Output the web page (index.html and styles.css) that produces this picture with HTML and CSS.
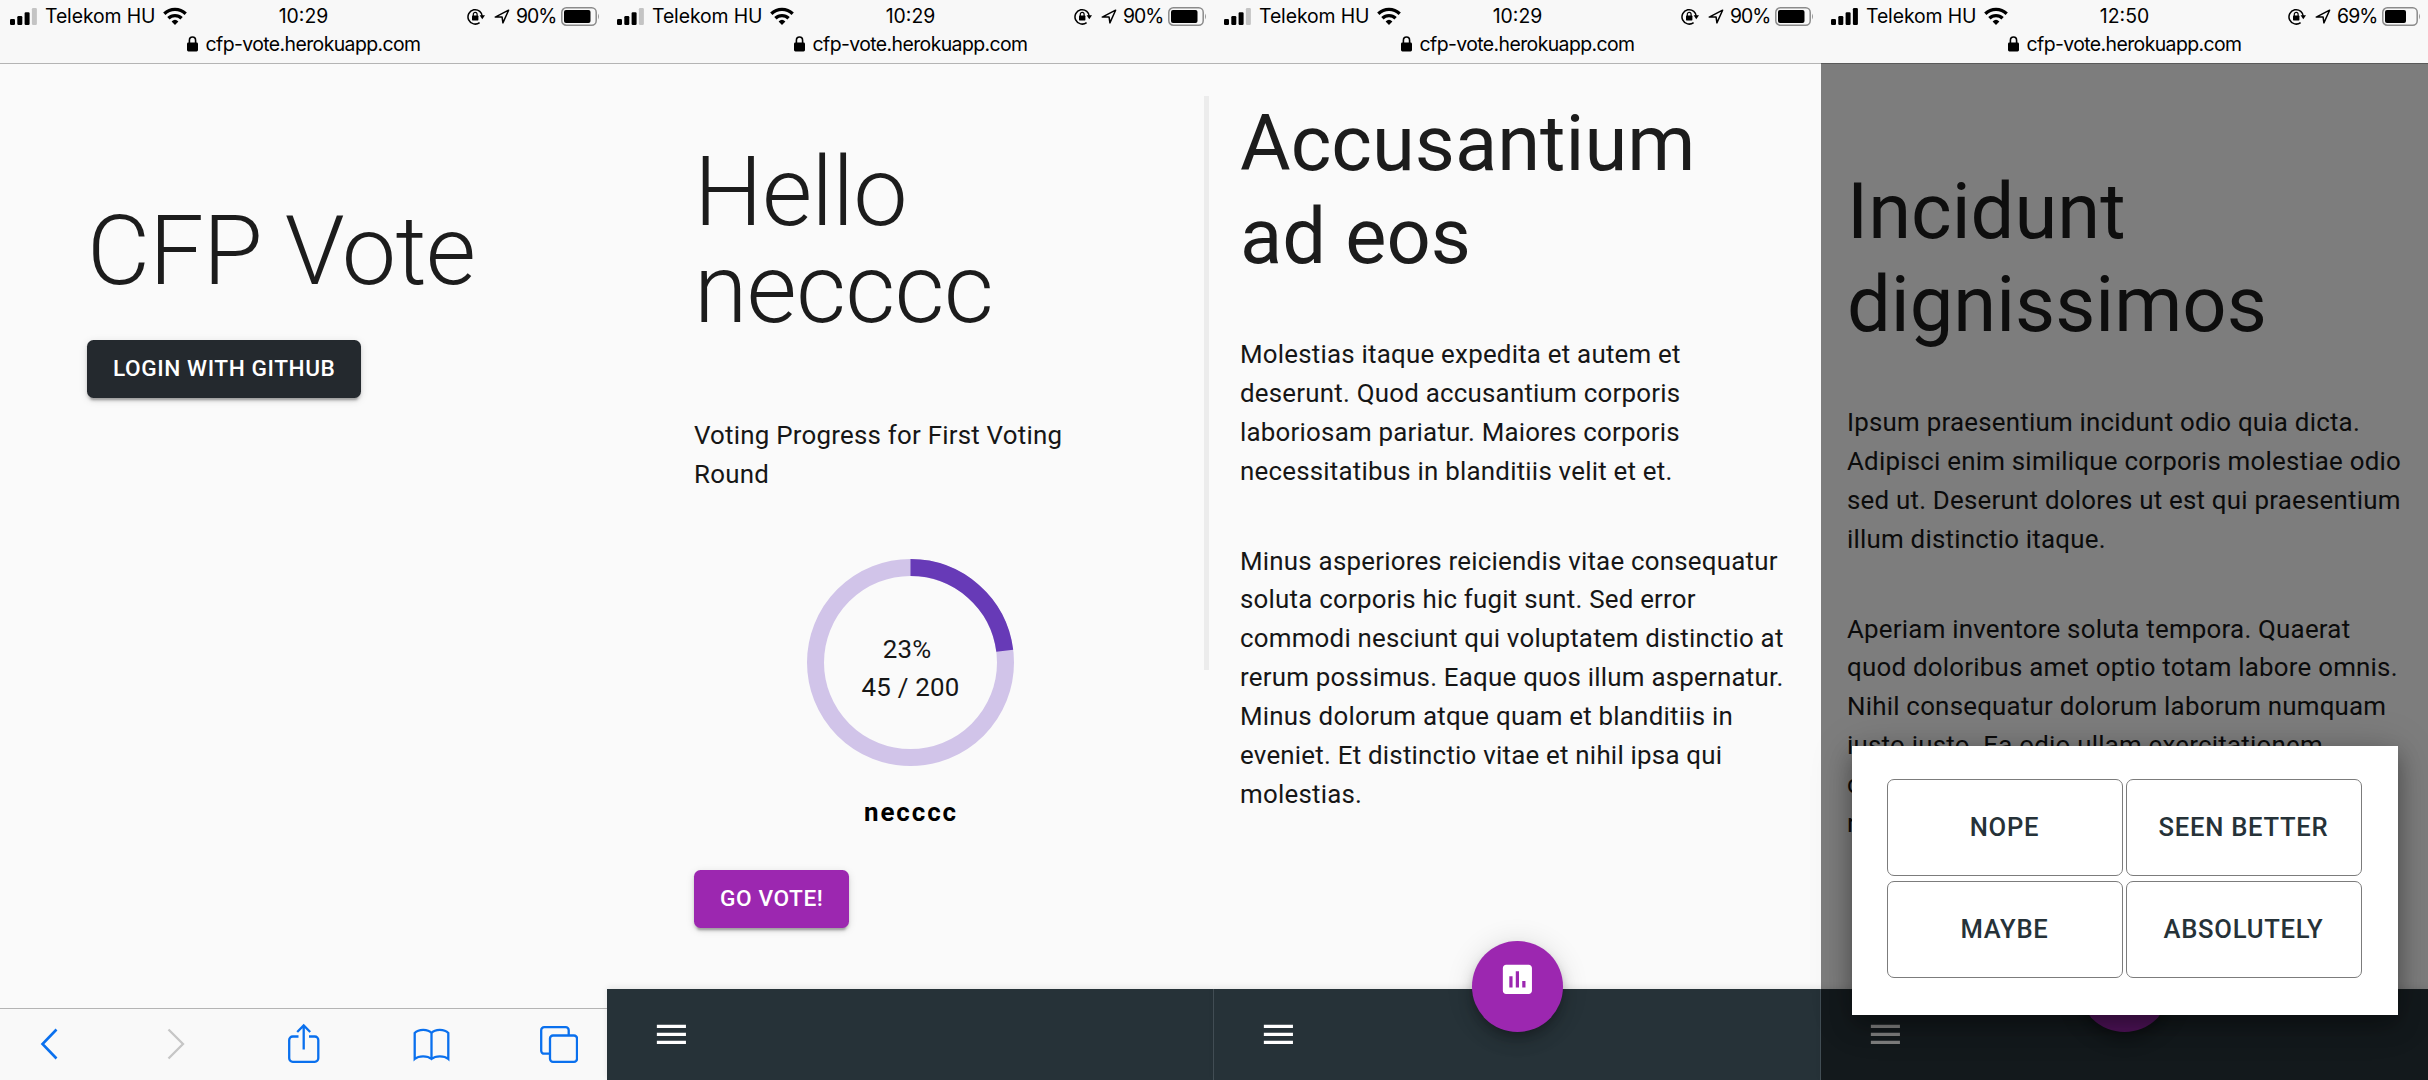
FILE: index.html
```html
<!DOCTYPE html>
<html lang="en">
<head>
<meta charset="utf-8">
<title>CFP Vote</title>
<link rel="stylesheet" href="styles.css">
</head>
<body>
<svg class="defs" aria-hidden="true">
  <symbol id="signal" viewBox="0 0 28 17"><rect x="0" y="11" width="5" height="6" rx="1.2"/><rect x="7.3" y="8" width="5" height="9" rx="1.2"/><rect x="14.6" y="4.3" width="5" height="12.7" rx="1.2"/></symbol>
  <symbol id="wifi" viewBox="0 0 24 18"><path d="M12 18 8.6 14.4a5 5 0 0 1 6.8 0z"/><path d="M5.4 11.2a9.5 9.5 0 0 1 13.2 0M1.3 6.7a15.6 15.6 0 0 1 21.4 0" fill="none" stroke="currentColor" stroke-width="3.3"/></symbol>
  <symbol id="rotation" viewBox="0 0 18 17"><path d="M12.6 14.6A7.2 7.2 0 1 1 15.4 9" fill="none" stroke="currentColor" stroke-width="1.5"/><path d="M12.6 7.2H18l-2.7 4z"/><rect x="5" y="7.6" width="6.4" height="4.8" rx=".6"/><path d="M6.3 8V6.2a1.9 1.9 0 0 1 3.8 0V8" fill="none" stroke="currentColor" stroke-width="1.2"/></symbol>
  <symbol id="locate" viewBox="0 0 16 15"><path d="M1.2 8.1 14.6 1.2 8.9 13.9 8.1 8.1z" fill="none" stroke="currentColor" stroke-width="1.5" stroke-linejoin="round"/></symbol>
  <symbol id="lock" viewBox="0 0 11 16"><rect x="0" y="6.6" width="11" height="8.9" rx="1.4"/><path d="M2.4 7.5V4.4a3.1 3.4 0 0 1 6.2 0v3.1" fill="none" stroke="currentColor" stroke-width="1.6"/></symbol>
  <symbol id="menu" viewBox="0 0 24 24"><path d="M3 18h18v-2H3v2zm0-5h18v-2H3v2zm0-7v2h18V6H3z"/></symbol>
  <symbol id="poll" viewBox="0 0 24 24"><path d="M19 3H5c-1.1 0-2 .9-2 2v14c0 1.1.9 2 2 2h14c1.1 0 2-.9 2-2V5c0-1.1-.9-2-2-2zM9 17H7v-7h2v7zm4 0h-2V7h2v10zm4 0h-2v-4h2v4z"/></symbol>
</svg>
<main class="screens">

  <section class="screen">
    <header class="chrome">
      <div class="status">
        <div class="carrier"><svg class="signal"><use href="#signal"/><rect class="weak" x="21.9" y="0" width="5" height="17" rx="1.2"/></svg><span>Telekom HU</span><svg class="wifi"><use href="#wifi"/></svg></div>
        <span class="time">10:29</span>
        <div class="power"><svg class="rotation"><use href="#rotation"/></svg><svg class="locate"><use href="#locate"/></svg><span class="percent">90%</span><svg class="battery"><rect x=".8" y=".8" width="34.4" height="17.4" rx="4.5" class="shell"/><rect x="3" y="3" width="26.5" height="13" rx="2"/><path class="tip" d="M37 6.5q2 3 0 6z"/></svg></div>
      </div>
      <div class="address"><svg class="lock"><use href="#lock"/></svg><span>cfp-vote.herokuapp.com</span></div>
    </header>
    <div class="page page-login">
      <h1 class="display">CFP Vote</h1>
      <button class="btn btn-github">LOGIN WITH GITHUB</button>
    </div>
    <nav class="toolbar">
      <svg class="tool" viewBox="0 0 40 40"><path d="M18.500 6.500 4.500 21l14 14.500" stroke-width="2.600"/></svg>
      <svg class="tool tool-off" viewBox="0 0 40 40"><path d="M5.500 6.500 20 21 5.500 35.500"/></svg>
      <svg class="tool" viewBox="0 0 40 40"><path d="M10.500 13.500H4.700a3.500 3.500 0 0 0-3.500 3.500v18.300a3.500 3.500 0 0 0 3.500 3.500h22.100a3.500 3.500 0 0 0 3.500-3.500V17a3.500 3.500 0 0 0-3.500-3.500H21M15.700 26.500V2.500M9.200 9l6.500-6.500L22.200 9"/></svg>
      <svg class="tool" viewBox="0 0 40 40"><path d="M18.500 10C15 5.700 5.500 5.700 1.700 10v26c4-3.500 12.800-3.500 16.800 0 4-3.500 12.800-3.500 16.800 0V10C31.500 5.700 22 5.700 18.500 10zM18.500 10v26"/></svg>
      <svg class="tool" viewBox="0 0 40 40"><path d="M11 30.700H6.200a3 3 0 0 1-3-3V7.200a3 3 0 0 1 3-3h21.500a3 3 0 0 1 3 3v5"/><rect x="12" y="12.500" width="27" height="26.300" rx="3"/></svg>
    </nav>
  </section>

  <section class="screen">
    <header class="chrome">
      <div class="status">
        <div class="carrier"><svg class="signal"><use href="#signal"/><rect class="weak" x="21.9" y="0" width="5" height="17" rx="1.2"/></svg><span>Telekom HU</span><svg class="wifi"><use href="#wifi"/></svg></div>
        <span class="time">10:29</span>
        <div class="power"><svg class="rotation"><use href="#rotation"/></svg><svg class="locate"><use href="#locate"/></svg><span class="percent">90%</span><svg class="battery"><rect x=".8" y=".8" width="34.4" height="17.4" rx="4.5" class="shell"/><rect x="3" y="3" width="26.5" height="13" rx="2"/><path class="tip" d="M37 6.5q2 3 0 6z"/></svg></div>
      </div>
      <div class="address"><svg class="lock"><use href="#lock"/></svg><span>cfp-vote.herokuapp.com</span></div>
    </header>
    <div class="page page-progress">
      <h1 class="display">Hello<br>necccc</h1>
      <p class="body-text progress-title">Voting Progress for First Voting<br>Round</p>
      <div class="donut">
        <svg class="ring" viewBox="0 0 207 207"><circle class="track" cx="103.500" cy="103.500" r="95"/><circle class="done" cx="103.500" cy="103.500" r="95" pathLength="100" stroke-dasharray="23 77" transform="rotate(-90 103.500 103.500)"/></svg>
        <div class="donut-label body-text"><span>23%&nbsp;</span><span>45 / 200</span></div>
      </div>
      <strong class="username">necccc</strong>
      <button class="btn btn-vote">GO VOTE!</button>
      <span class="scrollbar"></span>
    </div>
    <nav class="appbar appbar-edge"><svg class="menu"><use href="#menu"/></svg></nav>
  </section>

  <section class="screen">
    <header class="chrome">
      <div class="status">
        <div class="carrier"><svg class="signal"><use href="#signal"/><rect class="weak" x="21.9" y="0" width="5" height="17" rx="1.2"/></svg><span>Telekom HU</span><svg class="wifi"><use href="#wifi"/></svg></div>
        <span class="time">10:29</span>
        <div class="power"><svg class="rotation"><use href="#rotation"/></svg><svg class="locate"><use href="#locate"/></svg><span class="percent">90%</span><svg class="battery"><rect x=".8" y=".8" width="34.4" height="17.4" rx="4.5" class="shell"/><rect x="3" y="3" width="26.5" height="13" rx="2"/><path class="tip" d="M37 6.5q2 3 0 6z"/></svg></div>
      </div>
      <div class="address"><svg class="lock"><use href="#lock"/></svg><span>cfp-vote.herokuapp.com</span></div>
    </header>
    <article class="page page-talk">
      <h2 class="title">Accusantium<br>ad eos</h2>
      <p class="body-text">Molestias itaque expedita et autem et<br>deserunt. Quod accusantium corporis<br>laboriosam pariatur. Maiores corporis<br>necessitatibus in blanditiis velit et et.</p>
      <p class="body-text">Minus asperiores reiciendis vitae consequatur<br>soluta corporis hic fugit sunt. Sed error<br>commodi nesciunt qui voluptatem distinctio at<br>rerum possimus. Eaque quos illum aspernatur.<br>Minus dolorum atque quam et blanditiis in<br>eveniet. Et distinctio vitae et nihil ipsa qui<br>molestias.</p>
    </article>
    <nav class="appbar appbar-edge"><svg class="menu"><use href="#menu"/></svg><button class="fab"><svg class="poll"><use href="#poll"/></svg></button></nav>
  </section>

  <section class="screen">
    <header class="chrome">
      <div class="status">
        <div class="carrier"><svg class="signal"><use href="#signal"/><rect x="21.9" y="0" width="5" height="17" rx="1.2"/></svg><span>Telekom HU</span><svg class="wifi"><use href="#wifi"/></svg></div>
        <span class="time">12:50</span>
        <div class="power"><svg class="rotation"><use href="#rotation"/></svg><svg class="locate"><use href="#locate"/></svg><span class="percent">69%</span><svg class="battery"><rect x=".8" y=".8" width="34.4" height="17.4" rx="4.5" class="shell"/><rect x="3" y="3" width="21" height="13" rx="2"/><path class="tip" d="M37 6.5q2 3 0 6z"/></svg></div>
      </div>
      <div class="address"><svg class="lock"><use href="#lock"/></svg><span>cfp-vote.herokuapp.com</span></div>
    </header>
    <article class="page page-talk page-talk-low">
      <h2 class="title">Incidunt<br>dignissimos</h2>
      <p class="body-text">Ipsum praesentium incidunt odio quia dicta.<br>Adipisci enim similique corporis molestiae odio<br>sed ut. Deserunt dolores ut est qui praesentium<br>illum distinctio itaque.</p>
      <p class="body-text">Aperiam inventore soluta tempora. Quaerat<br>quod doloribus amet optio totam labore omnis.<br>Nihil consequatur dolorum laborum numquam<br>iusto iusto. Ea odio ullam exercitationem<br>corporis<br>rerum.</p>
    </article>
    <nav class="appbar"><svg class="menu"><use href="#menu"/></svg><button class="fab"><svg class="poll"><use href="#poll"/></svg></button></nav>
    <div class="backdrop"></div>
    <div class="dialog">
      <button class="choice">NOPE</button>
      <button class="choice">SEEN BETTER</button>
      <button class="choice">MAYBE</button>
      <button class="choice">ABSOLUTELY</button>
    </div>
  </section>
</main>
</body>
</html>
```

FILE: styles.css
```css
* { box-sizing: border-box; }

body {
  margin: 0;
  width: 2428px;
  height: 1080px;
  overflow: hidden;
  background: #fafafa;
  color: #1c1c1c;
  font-family: Roboto, sans-serif;
}

h1, h2, p { margin: 0; }
svg { display: block; fill: currentColor; flex: none; }
button { border: 0; font: inherit; white-space: nowrap; }
.defs { position: absolute; width: 0; height: 0; }

.screens { display: grid; grid-template-columns: repeat(4, 607px); height: 1080px; }
.screen { position: relative; display: flex; flex-direction: column; height: 1080px; min-width: 0; }

/* browser chrome */
.chrome {
  height: 64px;
  flex: none;
  border-bottom: 1px solid #b4b4b4;
  background: #f8f8f8;
  color: #000;
  font: 19.4px/24px Inter, sans-serif;
}
.status { display: grid; grid-template-columns: 1fr auto 1fr; align-items: center; height: 32px; padding: 0 7px; }
.carrier, .power { display: flex; align-items: center; white-space: nowrap; }
.carrier { gap: 7px; padding-left: 3px; letter-spacing: -0.1px; }
.power { justify-content: flex-end; }
.percent { letter-spacing: -0.9px; }
.signal { width: 28px; height: 17px; }
.weak { fill: #c4c4c4; }
.wifi { width: 24px; height: 18px; margin-left: 1px; }
.rotation { width: 18px; height: 17px; margin-right: 9px; }
.locate { width: 16px; height: 15px; margin-right: 6px; }
.battery { width: 39px; height: 19px; margin-left: 4.5px; }
.shell { fill: none; stroke: #8b8b8b; stroke-width: 1.5; }
.tip { fill: #9a9a9a; }
.address { display: flex; justify-content: center; align-items: center; gap: 8px; height: 24px; letter-spacing: -0.58px; }
.lock { width: 11px; height: 16px; }

/* page content */
.page { flex: 1; min-height: 0; display: flex; flex-direction: column; align-items: flex-start; }
.display { font-weight: 300; font-size: 97.1px; line-height: 97.1px; letter-spacing: -0.00833em; }
.title { font-weight: 400; font-size: 77.7px; line-height: 92.7px; }
.body-text { font-size: 25.9px; line-height: 38.85px; letter-spacing: 0.0085em; white-space: nowrap; color: #161616; }

.page-login { padding: 139.3px 0 0 87px; gap: 39.7px; }
.page-progress { padding: 80.3px 0 0 87px; }
.page-talk { padding: 34.4px 0 0 26px; gap: 51.2px; overflow: hidden; }
.page-talk-low { padding-top: 102.4px; }

.btn {
  height: 58px;
  padding: 0 26px 2px;
  border-radius: 6.5px;
  color: #fff;
  font-weight: 500;
  font-size: 22.65px;
  letter-spacing: 0.58px;
  box-shadow: 0 5px 2px -3px rgba(0,0,0,.2), 0 3px 3px rgba(0,0,0,.14), 0 2px 8px rgba(0,0,0,.12);
}
.btn-github { background: #24292e; }
.btn-vote { background: #9c27b0; margin-top: 38px; }

.progress-title { margin-top: 77.3px; }
.donut { position: relative; width: 207px; height: 207px; margin: 66px 0 0 113px; display: flex; align-items: center; justify-content: center; }
.ring { position: absolute; inset: 0; width: 207px; height: 207px; fill: none; stroke-width: 17; }
.track { stroke: #d1c4e9; }
.done { stroke: #673ab7; }
.donut-label { display: flex; flex-direction: column; align-items: center; padding-top: 11px; }
.username { width: 434px; margin-top: 27px; text-align: center; font-weight: 700; font-size: 25.9px; line-height: 38.85px; letter-spacing: 1.9px; color: #000; }
.scrollbar { position: absolute; right: 5px; top: 96px; width: 5px; height: 574px; background: #ececec; }

/* bottom bars */
.toolbar {
  height: 72px;
  flex: none;
  display: flex;
  justify-content: space-between;
  padding: 14px 29px 0 38px;
  border-top: 1px solid #b4b4b4;
  background: #f9f9f9;
}
.tool { width: 40px; height: 40px; fill: none; stroke: #0a70ee; stroke-width: 2.3; }
.tool-off { stroke: #c6c6c6; }
.appbar {
  position: relative;
  height: 91px;
  flex: none;
  padding: 26px 45px;
  background: #263238;
  color: #fff;
  box-shadow: 0 -2px 6px rgba(0,0,0,.08);
}
.appbar-edge { border-right: 1px solid #445057; }
.menu { width: 38.8px; height: 38.8px; }
.fab {
  position: absolute;
  left: 258px;
  top: -48px;
  width: 90.6px;
  height: 90.6px;
  padding: 0 0 14px;
  border-radius: 50%;
  background: #9c27b0;
  color: #fff;
  display: flex;
  align-items: center;
  justify-content: center;
  box-shadow: 0 5px 8px -2px rgba(0,0,0,.2), 0 10px 16px rgba(0,0,0,.14), 0 2px 29px rgba(0,0,0,.12);
}
.poll { width: 38.8px; height: 38.8px; }

/* voting dialog */
.backdrop { position: absolute; inset: 63px 0 0; background: rgba(0,0,0,.5); }
.dialog {
  position: absolute;
  left: 30.5px;
  top: 746px;
  width: 546.5px;
  height: 269px;
  padding: 33px 35px 37px;
  display: grid;
  grid-template-columns: 236px 236px;
  grid-template-rows: 97px 97px;
  gap: 5px 3px;
  background: #fff;
  box-shadow: 0 10px 20px rgba(0,0,0,.3), 0 4px 40px rgba(0,0,0,.2);
}
.choice {
  padding: 0 0 1px;
  border: 1px solid #7c7c7c;
  border-radius: 7px;
  background: #fff;
  color: #263238;
  font-weight: 500;
  font-size: 25.6px;
  letter-spacing: 0.02857em;
}
```
